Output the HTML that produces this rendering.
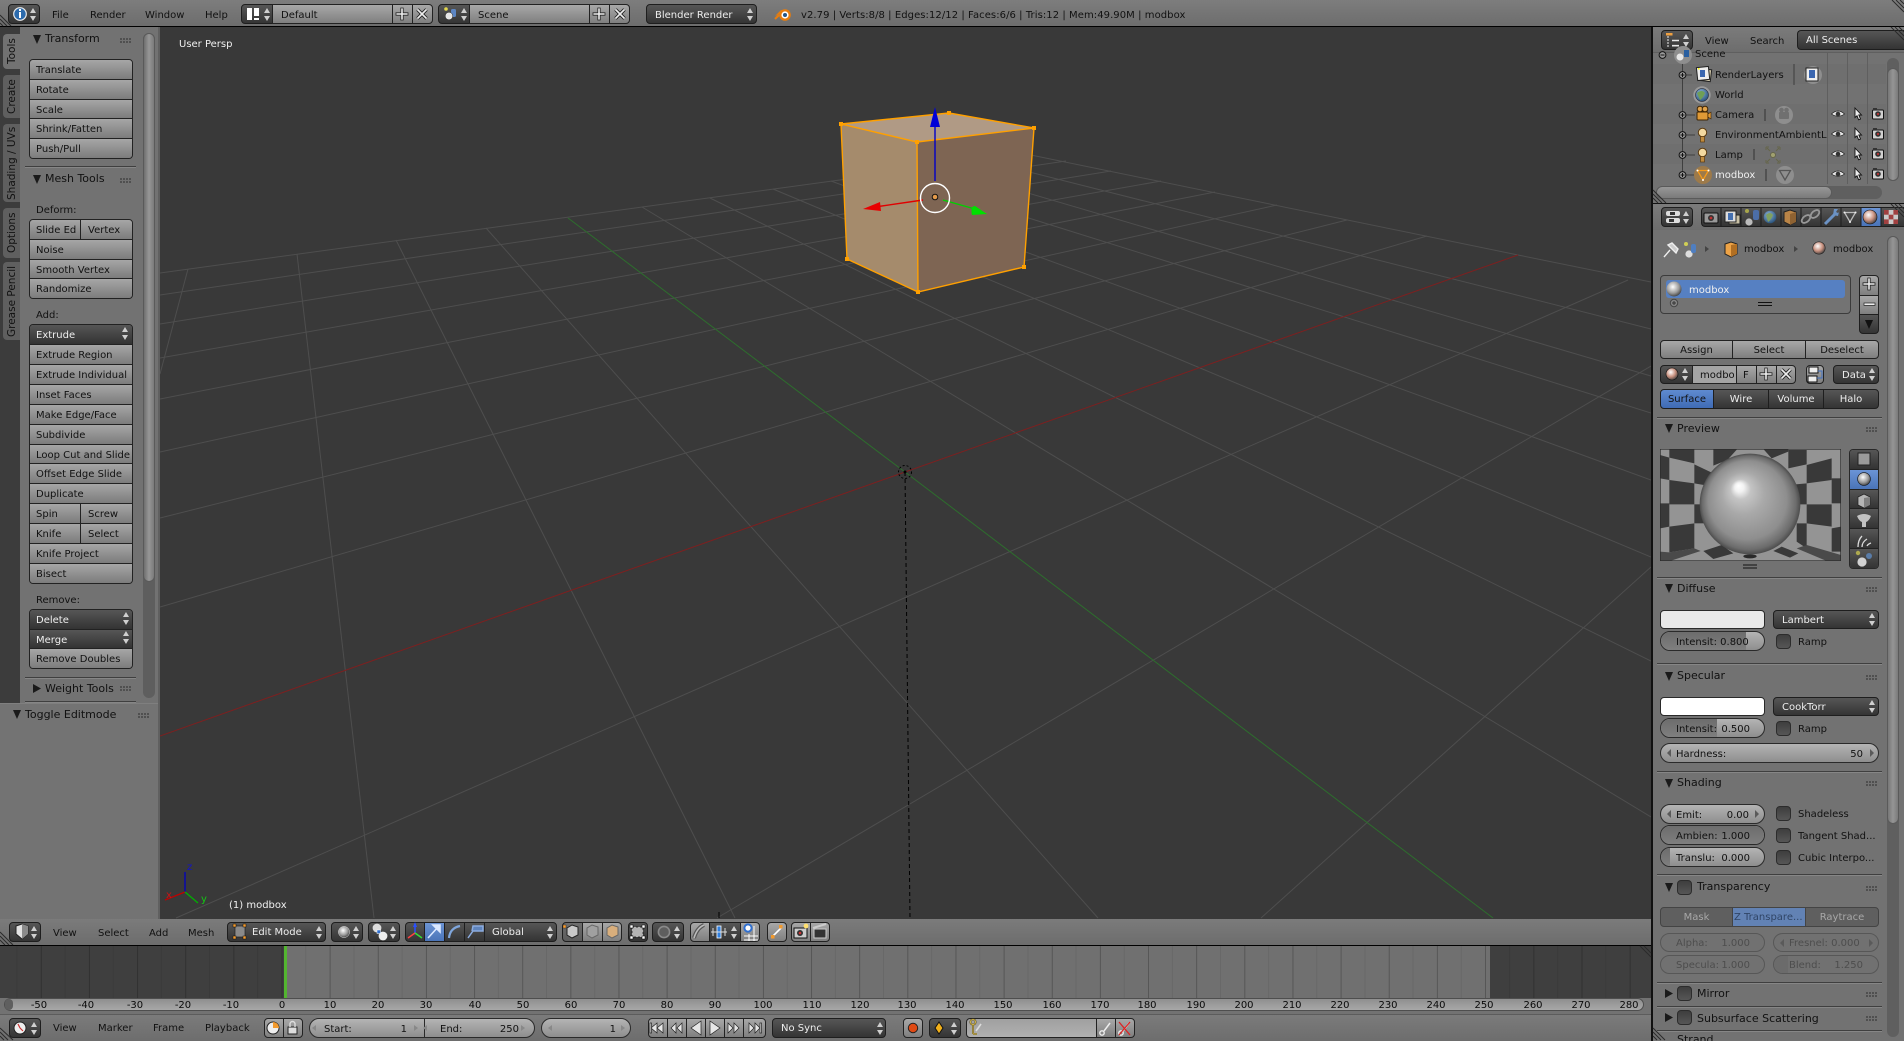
<!DOCTYPE html>
<html style="width:1904px;height:1041px;overflow:hidden"><head><meta charset="utf-8"><title>Blender</title>
<style>
html,body{margin:0;padding:0}
body{width:1904px;height:1041px;overflow:hidden;background:#727272;position:relative;font:10px/14px "DejaVu Sans","Liberation Sans",sans-serif;color:#000}
div,span{box-sizing:border-box}
.a{position:absolute}
.t{position:absolute;white-space:nowrap;line-height:14px;color:#111;margin-top:1px}
.h11{font-size:11px;color:#111;margin-top:0}
.w{color:#f0f0f0}
.grp{position:absolute;border:1px solid #222;border-radius:4px;overflow:hidden;display:flex;flex-direction:column}
.r{flex:1 1 0;display:flex;border-bottom:1px solid #222;min-height:0}
.r:last-child{border-bottom:0}
.c0{flex:1 1 0;padding-left:6px;background:linear-gradient(#a6a6a6,#7c7c7c);white-space:nowrap;overflow:hidden;line-height:21px;border-right:1px solid #222;color:#111}
.c0:last-child{border-right:0}
.dk{background:linear-gradient(#565656,#333);color:#eee}
.bl{background:linear-gradient(#6b94d6,#4a74b8)}
.m{position:absolute;border:1px solid #1e1e1e;border-radius:4px;background:linear-gradient(#565656,#343434);color:#eee;white-space:nowrap;overflow:hidden}
.lt{position:absolute;border:1px solid #222;background:linear-gradient(#a8a8a8,#7f7f7f);color:#111;white-space:nowrap;overflow:hidden}
.n{position:absolute;height:20px;border:1px solid #2a2a2a;border-radius:10px;background:linear-gradient(#b4b4b4,#8e8e8e);overflow:hidden;color:#111}
.n b{position:absolute;left:0;top:0;bottom:0;background:linear-gradient(#6c6c6c,#7f7f7f);font-weight:normal}
.n span{position:absolute;top:4px;line-height:14px;white-space:nowrap}
.off{border-color:#575757;background:#717171;color:#4d4d4d}
.off b{background:#6b6b6b}
.cb{position:absolute;width:15px;height:15px;border:1px solid #2c2c2c;border-radius:4px;background:linear-gradient(#3e3e3e,#565656)}
.sep{position:absolute;height:1px;background:#3f3f3f;border-bottom:0;box-shadow:0 1px 0 #868686}
.g{position:absolute;width:12px;height:6px;background-image:radial-gradient(circle at 1px 1px,#2f2f2f .6px,transparent 1px);background-size:3px 3px}
.vt{position:absolute;writing-mode:vertical-rl;transform:rotate(180deg);white-space:nowrap;line-height:16px;text-align:center;color:#111;font-size:10.5px}
.tab{position:absolute;left:3px;width:17px;background:#5f5f5f;border-radius:4px 0 0 4px}
.row{position:absolute;left:1653px;width:233px;height:20px}
</style></head><body>

<!-- top bar -->
<div class="a" style="left:0;top:0;width:1904px;height:26px;background:linear-gradient(#7d7d7d,#6d6d6d)"></div>
<div class="a" style="left:0;top:26px;width:1904px;height:1px;background:#000"></div>

<!-- viewport -->
<div class="a" style="left:160px;top:27px;width:1491px;height:892px;background:#393939"></div>
<div class="a" style="left:0;top:27px;width:160px;height:892px;background:#727272"></div>
<div class="a" style="left:0;top:27px;width:20px;height:677px;background:#3c3c3c"></div>
<div class="a" style="left:158px;top:27px;width:2px;height:892px;background:#606060"></div>

<!-- left tabs -->
<div class="tab" style="top:34px;height:35px;background:#727272"></div>
<div class="tab" style="top:75px;height:43px"></div>
<div class="tab" style="top:124px;height:78px"></div>
<div class="tab" style="top:208px;height:50px"></div>
<div class="tab" style="top:262px;height:78px"></div>
<span class="vt" style="left:4px;top:34px;height:35px">Tools</span>
<span class="vt" style="left:4px;top:75px;height:43px">Create</span>
<span class="vt" style="left:4px;top:124px;height:78px">Shading / UVs</span>
<span class="vt" style="left:4px;top:208px;height:50px">Options</span>
<span class="vt" style="left:4px;top:262px;height:78px">Grease Pencil</span>

<!-- left panel scrollbar -->
<div class="a" style="left:143px;top:33px;width:12px;height:665px;border-radius:6px;background:#5e5e5e"></div>
<div class="a" style="left:143px;top:33px;width:12px;height:549px;border-radius:6px;background:linear-gradient(90deg,#6f6f6f,#979797 50%,#7a7a7a);border:1px solid #5a5a5a"></div>

<span class="t h11" style="left:45px;top:32px">Transform</span><div class="g" style="left:120px;top:38px"></div>
<div class="grp" style="left:29px;top:59px;width:104px;height:100px">
<div class="r"><div class="c0">Translate</div></div><div class="r"><div class="c0">Rotate</div></div><div class="r"><div class="c0">Scale</div></div><div class="r"><div class="c0">Shrink/Fatten</div></div><div class="r"><div class="c0">Push/Pull</div></div>
</div>
<div class="sep" style="left:25px;top:166px;width:111px"></div>
<span class="t h11" style="left:45px;top:172px">Mesh Tools</span><div class="g" style="left:120px;top:178px"></div>
<span class="t" style="left:36px;top:203px">Deform:</span>
<div class="grp" style="left:29px;top:219px;width:104px;height:80px">
<div class="r"><div class="c0" style="flex:0 0 51px">Slide Ed</div><div class="c0" style="padding-left:7px">Vertex</div></div>
<div class="r"><div class="c0">Noise</div></div><div class="r"><div class="c0">Smooth Vertex</div></div><div class="r"><div class="c0">Randomize</div></div>
</div>
<span class="t" style="left:36px;top:308px">Add:</span>
<div class="grp" style="left:29px;top:324px;width:104px;height:260px">
<div class="r"><div class="c0 dk">Extrude</div></div>
<div class="r"><div class="c0">Extrude Region</div></div><div class="r"><div class="c0">Extrude Individual</div></div><div class="r"><div class="c0">Inset Faces</div></div><div class="r"><div class="c0">Make Edge/Face</div></div><div class="r"><div class="c0">Subdivide</div></div><div class="r"><div class="c0" style="padding-right:0">Loop Cut and Slide</div></div><div class="r"><div class="c0">Offset Edge Slide</div></div><div class="r"><div class="c0">Duplicate</div></div>
<div class="r"><div class="c0" style="flex:0 0 51px">Spin</div><div class="c0" style="padding-left:7px">Screw</div></div>
<div class="r"><div class="c0" style="flex:0 0 51px">Knife</div><div class="c0" style="padding-left:7px">Select</div></div>
<div class="r"><div class="c0">Knife Project</div></div><div class="r"><div class="c0">Bisect</div></div>
</div>
<span class="t" style="left:36px;top:593px">Remove:</span>
<div class="grp" style="left:29px;top:609px;width:104px;height:60px">
<div class="r"><div class="c0 dk">Delete</div></div><div class="r"><div class="c0 dk">Merge</div></div><div class="r"><div class="c0">Remove Doubles</div></div>
</div>
<div class="sep" style="left:25px;top:677px;width:111px"></div>
<span class="t h11" style="left:45px;top:682px">Weight Tools</span><div class="g" style="left:120px;top:686px"></div>
<div class="sep" style="left:25px;top:701px;width:111px"></div>
<div class="a" style="left:0;top:703px;width:158px;height:216px;background:#737373;border-top:1px solid #7f7f7f"></div>
<span class="t h11" style="left:25px;top:708px">Toggle Editmode</span><div class="g" style="left:138px;top:713px"></div>

<!-- top bar widgets -->
<div class="m" style="left:8px;top:4px;width:32px;height:20px"></div>
<span class="t" style="left:52px;top:8px">File</span><span class="t" style="left:90px;top:8px">Render</span><span class="t" style="left:145px;top:8px">Window</span><span class="t" style="left:205px;top:8px">Help</span>
<div class="m" style="left:241px;top:4px;width:33px;height:20px;border-radius:4px 0 0 4px"></div>
<div class="lt" style="left:272px;top:4px;width:121px;height:20px;padding:4px 0 0 8px">Default</div>
<div class="lt" style="left:392px;top:4px;width:21px;height:20px"></div>
<div class="lt" style="left:412px;top:4px;width:21px;height:20px;border-radius:0 4px 4px 0"></div>
<div class="m" style="left:438px;top:4px;width:33px;height:20px;border-radius:4px 0 0 4px"></div>
<div class="lt" style="left:469px;top:4px;width:121px;height:20px;padding:4px 0 0 8px">Scene</div>
<div class="lt" style="left:589px;top:4px;width:21px;height:20px"></div>
<div class="lt" style="left:609px;top:4px;width:21px;height:20px;border-radius:0 4px 4px 0"></div>
<div class="m" style="left:646px;top:4px;width:111px;height:20px;padding:4px 0 0 8px">Blender Render</div>
<span class="t" style="left:801px;top:8px;color:#111;letter-spacing:.065px">v2.79 | Verts:8/8 | Edges:12/12 | Faces:6/6 | Tris:12 | Mem:49.90M | modbox</span>

<span class="t w" style="left:179px;top:37px">User Persp</span>
<span class="t w" style="left:229px;top:898px">(1) modbox</span>

<!-- 3D header -->
<div class="a" style="left:0;top:919px;width:1651px;height:26px;background:linear-gradient(#7b7b7b,#6d6d6d)"></div>
<div class="a" style="left:0;top:945px;width:1651px;height:1px;background:#000"></div>
<div class="m" style="left:9px;top:922px;width:32px;height:20px"></div>
<span class="t" style="left:53px;top:926px">View</span><span class="t" style="left:98px;top:926px">Select</span><span class="t" style="left:149px;top:926px">Add</span><span class="t" style="left:188px;top:926px">Mesh</span>
<div class="m" style="left:227px;top:922px;width:99px;height:20px;padding:3px 0 0 24px">Edit Mode</div>
<div class="m" style="left:331px;top:922px;width:32px;height:20px"></div>
<div class="m" style="left:368px;top:922px;width:32px;height:20px"></div>
<div class="m" style="left:405px;top:922px;width:20px;height:20px;border-radius:4px 0 0 4px"></div>
<div class="m" style="left:424px;top:922px;width:21px;height:20px;border-radius:0;background:linear-gradient(#6c94d4,#4a74b8)"></div>
<div class="m" style="left:444px;top:922px;width:21px;height:20px;border-radius:0"></div>
<div class="m" style="left:464px;top:922px;width:21px;height:20px;border-radius:0"></div>
<div class="m" style="left:484px;top:922px;width:73px;height:20px;padding:3px 0 0 7px;border-radius:0 4px 4px 0">Global</div>
<div class="m" style="left:562px;top:922px;width:21px;height:20px;border-radius:4px 0 0 4px;background:linear-gradient(#6e6e6e,#5c5c5c)"></div>
<div class="lt" style="left:582px;top:922px;width:21px;height:20px"></div>
<div class="lt" style="left:602px;top:922px;width:20px;height:20px;border-radius:0 4px 4px 0"></div>
<div class="m" style="left:628px;top:922px;width:20px;height:20px"></div>
<div class="m" style="left:652px;top:922px;width:32px;height:20px"></div>
<div class="lt" style="left:690px;top:922px;width:20px;height:20px;border-radius:4px 0 0 4px"></div>
<div class="m" style="left:709px;top:922px;width:32px;height:20px;border-radius:0"></div>
<div class="lt" style="left:740px;top:922px;width:20px;height:20px;border-radius:0 4px 4px 0"></div>
<div class="lt" style="left:767px;top:922px;width:20px;height:20px;border-radius:4px"></div>
<div class="lt" style="left:791px;top:922px;width:20px;height:20px;border-radius:4px 0 0 4px"></div>
<div class="lt" style="left:810px;top:922px;width:20px;height:20px;border-radius:0 4px 4px 0"></div>

<!-- timeline -->
<div class="a" style="left:0;top:946px;width:284px;height:52px;background-color:#3f3f3f;background-image:linear-gradient(90deg,#313131 1px,transparent 1px,transparent 24px,#3a3a3a 24px,#3a3a3a 25px,transparent 25px);background-size:48.15px 100%;background-position:40.75px 0"></div>
<div class="a" style="left:284px;top:946px;width:1206px;height:52px;background-color:#707070;background-image:linear-gradient(90deg,#565656 1px,transparent 1px,transparent 24px,#686868 24px,#686868 25px,transparent 25px);background-size:48.15px 100%;background-position:45.65px 0"></div>
<div class="a" style="left:1490px;top:946px;width:161px;height:52px;background-color:#3f3f3f;background-image:linear-gradient(90deg,#313131 1px,transparent 1px,transparent 24px,#3a3a3a 24px,#3a3a3a 25px,transparent 25px);background-size:48.15px 100%;background-position:43.4px 0"></div>
<div class="a" style="left:284px;top:946px;width:3px;height:52px;background:#53b530"></div>
<div class="a" style="left:4px;top:998px;width:1640px;height:13px;border-radius:7px;background:linear-gradient(#8f8f8f,#a8a8a8);border:1px solid #4e4e4e"></div>
<div class="a" style="left:5px;top:999px;width:8px;height:11px;border-radius:6px;background:#5f5f5f"></div>
<div class="a" style="left:0;top:1014px;width:1651px;height:27px;background:linear-gradient(#7b7b7b,#6d6d6d);border-top:1px solid #5c5c5c"></div>
<div class="m" style="left:9px;top:1018px;width:32px;height:20px"></div>
<span class="t" style="left:53px;top:1021px">View</span><span class="t" style="left:98px;top:1021px">Marker</span><span class="t" style="left:153px;top:1021px">Frame</span><span class="t" style="left:205px;top:1021px">Playback</span>
<div class="lt" style="left:264px;top:1018px;width:20px;height:20px;border-radius:4px 0 0 4px"></div>
<div class="lt" style="left:283px;top:1018px;width:20px;height:20px;border-radius:0 4px 4px 0"></div>
<div class="n" style="left:309px;top:1018px;width:116px;border-radius:10px 0 0 10px"><span style="left:14px">Start:</span><span style="right:17px">1</span></div>
<div class="n" style="left:424px;top:1018px;width:111px;border-radius:0 10px 10px 0"><span style="left:15px">End:</span><span style="right:15px">250</span></div>
<div class="n" style="left:541px;top:1018px;width:90px"><span style="right:14px">1</span></div>
<div class="lt" style="left:648px;top:1018px;width:20px;height:20px;border-radius:4px 0 0 4px"></div>
<div class="lt" style="left:667px;top:1018px;width:20px;height:20px"></div>
<div class="lt" style="left:686px;top:1018px;width:20px;height:20px"></div>
<div class="lt" style="left:705px;top:1018px;width:20px;height:20px"></div>
<div class="lt" style="left:724px;top:1018px;width:20px;height:20px"></div>
<div class="lt" style="left:743px;top:1018px;width:23px;height:20px;border-radius:0 4px 4px 0"></div>
<div class="m" style="left:772px;top:1018px;width:114px;height:20px;padding:3px 0 0 8px">No Sync</div>
<div class="lt" style="left:903px;top:1018px;width:20px;height:20px;border-radius:4px"></div>
<div class="m" style="left:929px;top:1018px;width:32px;height:20px"></div>
<div class="lt" style="left:966px;top:1018px;width:131px;height:20px;border-radius:4px 0 0 4px;background:linear-gradient(#a0a0a0,#b0b0b0)"></div>
<div class="lt" style="left:1096px;top:1018px;width:20px;height:20px"></div>
<div class="lt" style="left:1115px;top:1018px;width:20px;height:20px;border-radius:0 4px 4px 0"></div>

<!-- RIGHT PANE -->
<div class="a" style="left:1651px;top:27px;width:2px;height:1014px;background:#111"></div>
<div class="a" style="left:1653px;top:27px;width:251px;height:1014px;background:#727272"></div>
<!-- outliner -->
<div class="a" style="left:1653px;top:27px;width:251px;height:25px;background:linear-gradient(#7b7b7b,#6d6d6d)"></div>
<div class="a" style="left:1653px;top:52px;width:251px;height:1px;background:#5f5f5f"></div>
<div class="m" style="left:1661px;top:30px;width:32px;height:20px"></div>
<span class="t" style="left:1705px;top:34px">View</span><span class="t" style="left:1750px;top:34px">Search</span>
<div class="m" style="left:1797px;top:30px;width:107px;height:20px;padding:3px 0 0 8px;border-radius:4px 0 0 4px;border-right:0">All Scenes</div>
<div class="row" style="top:64px;background:#6f6f6f"></div>
<div class="row" style="top:104px;background:#6f6f6f"></div>
<div class="row" style="top:144px;background:#6f6f6f"></div>
<div class="a" style="left:1827px;top:53px;width:1px;height:131px;background:#5f5f5f"></div>
<div class="a" style="left:1847px;top:53px;width:1px;height:131px;background:#5f5f5f"></div>
<div class="a" style="left:1867px;top:53px;width:1px;height:131px;background:#5f5f5f"></div>
<span class="t" style="left:1695px;top:47px">Scene</span>
<span class="t" style="left:1715px;top:68px">RenderLayers</span>
<span class="t" style="left:1715px;top:88px">World</span>
<span class="t" style="left:1715px;top:108px">Camera</span>
<span class="t" style="left:1715px;top:128px">EnvironmentAmbientL</span>
<span class="t" style="left:1715px;top:148px">Lamp</span>
<span class="t w" style="left:1715px;top:168px">modbox</span>
<div class="a" style="left:1656px;top:186px;width:226px;height:13px;border-radius:7px;background:#5f5f5f"></div>
<div class="a" style="left:1656px;top:186px;width:176px;height:13px;border-radius:7px;background:linear-gradient(#979797,#7a7a7a);border:1px solid #5a5a5a"></div>
<div class="a" style="left:1887px;top:58px;width:12px;height:123px;border-radius:6px;background:#5f5f5f"></div>
<div class="a" style="left:1887px;top:68px;width:12px;height:113px;border-radius:6px;background:linear-gradient(90deg,#777,#959595 50%,#7a7a7a);border:1px solid #5a5a5a"></div>
<div class="a" style="left:1653px;top:203px;width:251px;height:1px;background:#111"></div>

<!-- props header -->
<div class="a" style="left:1653px;top:204px;width:251px;height:26px;background:linear-gradient(#7b7b7b,#6d6d6d)"></div>
<div class="m" style="left:1661px;top:207px;width:32px;height:20px"></div>
<div class="m" style="left:1701px;top:207px;width:203px;height:20px;border-radius:4px 0 0 4px;border-right:0"></div>
<div class="a" style="left:1861px;top:208px;width:20px;height:18px;background:linear-gradient(#6c94d4,#4a74b8)"></div>
<!-- props scrollbar -->
<div class="a" style="left:1887px;top:236px;width:12px;height:801px;border-radius:6px;background:#5f5f5f"></div>
<div class="a" style="left:1887px;top:236px;width:12px;height:588px;border-radius:6px;background:linear-gradient(90deg,#777,#959595 50%,#7a7a7a);border:1px solid #5a5a5a"></div>

<span class="t" style="left:1744px;top:242px">modbox</span><span class="t" style="left:1833px;top:242px">modbox</span>

<div class="a" style="left:1660px;top:275px;width:191px;height:39px;border:1px solid #3c3c3c;border-radius:4px;background:#737373"></div>
<div class="a" style="left:1666px;top:280px;width:179px;height:18px;background:#5680c2;border-radius:3px"></div>
<span class="t w" style="left:1689px;top:283px">modbox</span>
<div class="lt" style="left:1859px;top:275px;width:20px;height:21px;border-radius:4px 4px 0 0"></div>
<div class="lt" style="left:1859px;top:295px;width:20px;height:20px"></div>
<div class="m" style="left:1859px;top:314px;width:20px;height:20px;border-radius:0 0 4px 4px"></div>

<div class="lt" style="left:1660px;top:340px;width:73px;height:19px;border-radius:4px 0 0 4px;text-align:center;line-height:19px">Assign</div>
<div class="lt" style="left:1732px;top:340px;width:74px;height:19px;text-align:center;line-height:19px">Select</div>
<div class="lt" style="left:1805px;top:340px;width:74px;height:19px;border-radius:0 4px 4px 0;text-align:center;line-height:19px">Deselect</div>

<div class="m" style="left:1660px;top:365px;width:33px;height:19px;border-radius:4px 0 0 4px"></div>
<div class="lt" style="left:1692px;top:365px;width:45px;height:19px;padding-left:7px;line-height:20px;background:linear-gradient(#a4a4a4,#a4a4a4)">modbo</div>
<div class="lt" style="left:1736px;top:365px;width:21px;height:19px;padding-left:6px;line-height:20px">F</div>
<div class="lt" style="left:1756px;top:365px;width:21px;height:19px"></div>
<div class="lt" style="left:1776px;top:365px;width:20px;height:19px;border-radius:0 4px 4px 0"></div>
<div class="lt" style="left:1806px;top:365px;width:18px;height:19px;border-radius:4px"></div>
<div class="m" style="left:1833px;top:365px;width:46px;height:19px;padding:3px 0 0 8px">Data</div>

<div class="m" style="left:1660px;top:389px;width:54px;height:20px;border-radius:4px 0 0 4px;background:linear-gradient(#5f8bd0,#3f6bb5);color:#111;text-align:center;line-height:20px">Surface</div>
<div class="m" style="left:1713px;top:389px;width:56px;height:20px;border-radius:0;text-align:center;line-height:20px">Wire</div>
<div class="m" style="left:1768px;top:389px;width:56px;height:20px;border-radius:0;text-align:center;line-height:20px">Volume</div>
<div class="m" style="left:1823px;top:389px;width:56px;height:20px;border-radius:0 4px 4px 0;text-align:center;line-height:20px">Halo</div>

<div class="sep" style="left:1657px;top:417px;width:225px"></div>
<span class="t h11" style="left:1677px;top:422px">Preview</span><div class="g" style="left:1866px;top:427px"></div>
<div class="grp" style="left:1849px;top:449px;width:30px;height:120px;border-color:#282828">
<div class="r"><div class="c0 dk"></div></div><div class="r"><div class="c0 bl"></div></div><div class="r"><div class="c0 dk"></div></div><div class="r"><div class="c0 dk"></div></div><div class="r"><div class="c0 dk"></div></div><div class="r"><div class="c0 dk"></div></div>
</div>
<div class="sep" style="left:1657px;top:577px;width:225px"></div>
<span class="t h11" style="left:1677px;top:582px">Diffuse</span><div class="g" style="left:1866px;top:587px"></div>
<div class="a" style="left:1660px;top:610px;width:105px;height:19px;background:#e9e9e9;border:1px solid #2a2a2a;border-radius:4px"></div>
<div class="m" style="left:1773px;top:610px;width:106px;height:19px;padding:3px 0 0 8px">Lambert</div>
<div class="n" style="left:1660px;top:631px;width:105px"><b style="width:85px"></b><span style="left:15px">Intensit: 0.800</span></div>
<div class="cb" style="left:1776px;top:634px"></div><span class="t" style="left:1798px;top:635px">Ramp</span>
<div class="sep" style="left:1657px;top:663px;width:225px"></div>
<span class="t h11" style="left:1677px;top:669px">Specular</span><div class="g" style="left:1866px;top:675px"></div>
<div class="a" style="left:1660px;top:697px;width:105px;height:19px;background:#fff;border:1px solid #2a2a2a;border-radius:4px"></div>
<div class="m" style="left:1773px;top:697px;width:106px;height:19px;padding:3px 0 0 8px">CookTorr</div>
<div class="n" style="left:1660px;top:718px;width:105px"><b style="width:56px"></b><span style="left:15px">Intensit:</span><span style="right:14px">0.500</span></div>
<div class="cb" style="left:1776px;top:721px"></div><span class="t" style="left:1798px;top:722px">Ramp</span>
<div class="n" style="left:1660px;top:743px;width:219px"><span style="left:15px">Hardness:</span><span style="right:15px">50</span></div>
<div class="sep" style="left:1657px;top:771px;width:225px"></div>
<span class="t h11" style="left:1677px;top:776px">Shading</span><div class="g" style="left:1866px;top:781px"></div>
<div class="n" style="left:1660px;top:804px;width:105px"><span style="left:15px">Emit:</span><span style="right:15px">0.00</span></div>
<div class="n" style="left:1660px;top:825px;width:105px"><b style="width:105px"></b><span style="left:15px">Ambien:</span><span style="right:14px">1.000</span></div>
<div class="n" style="left:1660px;top:847px;width:105px"><b style="width:9px"></b><span style="left:15px">Translu:</span><span style="right:14px">0.000</span></div>
<div class="cb" style="left:1776px;top:806px"></div><span class="t" style="left:1798px;top:807px">Shadeless</span>
<div class="cb" style="left:1776px;top:828px"></div><span class="t" style="left:1798px;top:829px">Tangent Shad...</span>
<div class="cb" style="left:1776px;top:850px"></div><span class="t" style="left:1798px;top:851px">Cubic Interpo...</span>
<div class="sep" style="left:1657px;top:874px;width:225px"></div>
<div class="cb" style="left:1677px;top:880px"></div><span class="t h11" style="left:1697px;top:880px">Transparency</span><div class="g" style="left:1866px;top:886px"></div>
<div class="m" style="left:1660px;top:907px;width:73px;height:20px;border-radius:4px 0 0 4px;background:#5f5f5f;color:#a8a8a8;border-color:#444;text-align:center;line-height:20px">Mask</div>
<div class="m" style="left:1732px;top:907px;width:74px;height:20px;border-radius:0;background:#6282b4;color:#304566;border-color:#444;padding-left:1px;line-height:20px">Z Transpare...</div>
<div class="m" style="left:1805px;top:907px;width:74px;height:20px;border-radius:0 4px 4px 0;background:#5f5f5f;color:#a8a8a8;border-color:#444;text-align:center;line-height:20px">Raytrace</div>
<div class="n off" style="left:1660px;top:933px;width:105px;height:19px"><span style="left:15px;top:3px">Alpha:</span><span style="right:14px;top:3px">1.000</span></div>
<div class="n off" style="left:1773px;top:933px;width:106px;height:19px"><span style="left:15px;top:3px">Fresnel: 0.000</span></div>
<div class="n off" style="left:1660px;top:955px;width:105px;height:19px"><span style="left:15px;top:3px">Specula:</span><span style="right:14px;top:3px">1.000</span></div>
<div class="n off" style="left:1773px;top:955px;width:106px;height:19px"><b style="width:14px"></b><span style="left:15px;top:3px">Blend:</span><span style="right:15px;top:3px">1.250</span></div>
<div class="sep" style="left:1657px;top:982px;width:225px"></div>
<div class="cb" style="left:1677px;top:986px"></div><span class="t h11" style="left:1697px;top:987px">Mirror</span><div class="g" style="left:1866px;top:992px"></div>
<div class="sep" style="left:1657px;top:1006px;width:225px"></div>
<div class="cb" style="left:1677px;top:1010px"></div><span class="t h11" style="left:1697px;top:1012px">Subsurface Scattering</span><div class="g" style="left:1866px;top:1016px"></div>
<div class="sep" style="left:1657px;top:1030px;width:225px"></div>
<span class="t h11" style="left:1677px;top:1033px;height:8px;overflow:hidden">Strand</span>

<!-- overlay svg -->
<svg class="a" style="left:0;top:0;display:block" width="1904" height="1041" viewBox="0 0 1904 1041" font-family="DejaVu Sans, sans-serif">
<defs>
<g id="ud"><path d="M3 0L6 5H0z"/><path d="M3 13L6 8H0z"/></g>
<path id="td" d="M0 0H8L4 9z" fill="#1a1a1a"/>
<path id="trg" d="M0 0L8 4.5L0 9z" fill="#1a1a1a"/>
<g id="plus"><path d="M-6-1.2H-1.2V-6H1.2V-1.2H6V1.2H1.2V6H-1.2V1.2H-6z" fill="#eee" stroke="#222" stroke-width=".8"/></g>
<g id="cross"><path d="M-4.5-4.5L4.5 4.5M4.5-4.5L-4.5 4.5" stroke="#222" stroke-width="3.4"/><path d="M-4.5-4.5L4.5 4.5M4.5-4.5L-4.5 4.5" stroke="#eee" stroke-width="1.6"/></g>
<g id="eye"><path d="M-6.5 0Q0-6 6.5 0Q0 4.5-6.5 0z" fill="#e8e8e8" stroke="#222" stroke-width=".7"/><circle r="2.3" fill="#333"/></g>
<path id="arrow" d="M-3-6L3.5 1H.8L2.5 5L.6 5.8L-1 1.8L-3 3.5z" fill="#eee" stroke="#111" stroke-width=".9"/>
<g id="cam"><rect x="-5.5" y="-4" width="11" height="9" rx="1" fill="#d0d0d0" stroke="#111"/><circle r="2.8" fill="#333"/><circle cx="0" cy="0" r="1.1" fill="#b33"/><rect x="-5" y="-6" width="4" height="2" fill="#333"/></g>
<g id="bulb"><circle cy="-2.5" r="4.2" fill="#f3d9a0" stroke="#5a3a10"/><rect x="-2" y="1.5" width="4" height="5.5" fill="#bf8b3f" stroke="#5a3a10" stroke-width=".7"/></g>
<g id="pm"><circle r="3.4" fill="#999" stroke="#111"/><path d="M-2 0H2M0-2V2" stroke="#111"/></g>
<g id="tri"><path d="M-5.5-4.5H5.5L0 5z" fill="none" stroke-width="1.3"/></g>
<radialGradient id="sp" cx=".42" cy=".36" r=".7"><stop offset="0" stop-color="#fff"/><stop offset=".6" stop-color="#999"/><stop offset="1" stop-color="#333"/></radialGradient>
<radialGradient id="mat" cx=".4" cy=".35" r=".7"><stop offset="0" stop-color="#fff"/><stop offset=".55" stop-color="#c9917f"/><stop offset="1" stop-color="#3a3a3a"/></radialGradient>
<radialGradient id="earth" cx=".4" cy=".35" r=".7"><stop offset="0" stop-color="#8fb5d8"/><stop offset="1" stop-color="#254e78"/></radialGradient>
<radialGradient id="big" gradientUnits="userSpaceOnUse" cx="300" cy="177" r="151" fx="265" fy="122"><stop offset="0" stop-color="#fff"/><stop offset=".09" stop-color="#f2f2f2"/><stop offset=".2" stop-color="#c4c4c4"/><stop offset=".42" stop-color="#a9a9a9"/><stop offset=".78" stop-color="#8e8e8e"/><stop offset=".93" stop-color="#6c6c6c"/><stop offset="1" stop-color="#4c4c4c"/></radialGradient>
</defs>

<!-- viewport grid -->
<svg x="160" y="27" width="1491" height="892" viewBox="160 27 1491 892">
<g stroke="#4e4e4e" stroke-width="1" fill="none">
<path d="M160 273L1030 154M160 295L1066 161M160 324L1111 171M160 358L1161 181M160 399L1215 192M160 452L1277 205M160 518L1347 220M160 607L1427 236M176 918L1628 280M717 918L1651 366M1261 918L1651 567"/>
<path d="M188 269L160 374M297 254L374 918M396 240L735 918M486 228L1098 918M642 207L1651 817M710 198L1651 661M773 189L1651 557M831 181L1651 480M885 173L1651 413M936 166L1651 376M982 160L1651 329M1026 154L1518 255L1651 282"/>
</g>
<path d="M160 736L905 472L1518 255" stroke="#7c2020" fill="none"/>
<path d="M568 218L905 472L1493 918" stroke="#2d6e2d" fill="none"/>
<path d="M905 472L910 918" stroke="#000" stroke-dasharray="4 3" fill="none"/>
<path d="M719 912V918" stroke="#000"/>
<circle cx="905" cy="472" r="6.5" fill="none" stroke="#000" stroke-dasharray="2 2"/>
<circle cx="905" cy="472" r="1.5" fill="#000"/>
</svg>

<!-- cube -->
<path d="M841 124L949 113L1034 128L917 142z" fill="#b09a85"/>
<path d="M841 124L917 142L918 292L847 259z" fill="#a58b6c"/>
<path d="M917 142L1034 128L1024 267L918 292z" fill="#7e6553"/>
<path d="M841 124L949 113L1034 128L917 142zM841 124L847 259L918 292L1024 267L1034 128M917 142L918 292" fill="none" stroke="#ffa000" stroke-width="1.4"/>
<g fill="#ffa000"><rect x="839" y="122" width="4" height="4"/><rect x="947" y="111" width="4" height="4"/><rect x="1032" y="126" width="4" height="4"/><rect x="915" y="140" width="4" height="4"/><rect x="845" y="257" width="4" height="4"/><rect x="916" y="290" width="4" height="4"/><rect x="1022" y="265" width="4" height="4"/></g>
<!-- manipulator -->
<path d="M935 181V115" stroke="#0000c8" stroke-width="1.4"/><path d="M935 107L940 127H930z" fill="#0000d8"/>
<path d="M923 200L875 207" stroke="#e00000" stroke-width="1.4"/><path d="M863 209L880 202L881 211z" fill="#e80000"/>
<path d="M943 200L975 209" stroke="#00d000" stroke-width="1.4"/><path d="M987 214L975 206Q970 206 972 215z" fill="#00e000"/>
<circle cx="935" cy="198" r="14.5" fill="none" stroke="#fff" stroke-width="1.4"/>
<circle cx="935" cy="197" r="2.8" fill="#e39a4b" stroke="#111"/>
<!-- axis widget -->
<path d="M185 892V872" stroke="#0000c0" stroke-width="1.3"/><path d="M185 892L165 900" stroke="#c00000" stroke-width="1.3"/><path d="M185 892L198 903" stroke="#00b000" stroke-width="1.3"/>
<text x="187" y="870" fill="#1414c8" font-size="10">z</text><text x="166" y="898" fill="#c81414" font-size="10">x</text><text x="201" y="902" fill="#14c814" font-size="10">y</text>

<!-- hatch corners -->
<g stroke="#2b2b2b" stroke-width="1" fill="none">
<path d="M0 15L11 26M0 19L7 26M0 23L3 26"/><path d="M1892 0L1904 12M1896 0L1904 8M1900 0L1904 4"/>
<path d="M0 932L13 945M0 936L9 945M0 940L5 945"/><path d="M0 1028L13 1040M0 1032L8 1040M0 1036L4 1040"/>
<path d="M1891 27L1904 40M1895 27L1904 36M1899 27L1904 32"/><path d="M1891 204L1904 217M1895 204L1904 213M1899 204L1904 209"/>
<path d="M1653 190L1666 203M1653 194L1662 203M1653 198L1658 203"/><path d="M1653 1028L1665 1040M1653 1032L1661 1040M1653 1036L1657 1040"/>
<path d="M1640 946L1651 957M1644 946L1651 953"/>
</g>

<!-- ud arrows -->
<g fill="#cfcfcf">
<use href="#ud" x="30" y="8"/><use href="#ud" x="264" y="8"/><use href="#ud" x="461" y="8"/><use href="#ud" x="747" y="8"/>
<use href="#ud" x="122" y="327"/><use href="#ud" x="123" y="612"/><use href="#ud" x="123" y="631"/>
<use href="#ud" x="31" y="926"/><use href="#ud" x="316" y="926"/><use href="#ud" x="353" y="926"/><use href="#ud" x="390" y="926"/><use href="#ud" x="547" y="926"/><use href="#ud" x="674" y="926"/><use href="#ud" x="731" y="926"/>
<use href="#ud" x="31" y="1022"/><use href="#ud" x="877" y="1022"/><use href="#ud" x="951" y="1022"/>
<use href="#ud" x="1683" y="34"/><use href="#ud" x="1683" y="211"/><use href="#ud" x="1682" y="368"/><use href="#ud" x="1869" y="368"/>
<use href="#ud" x="1869" y="613"/><use href="#ud" x="1869" y="700"/>
</g>

<!-- panel triangles -->
<use href="#td" x="33" y="35"/><use href="#td" x="33" y="175"/><use href="#trg" x="33" y="684"/><use href="#td" x="13" y="710"/>
<use href="#td" x="1665" y="424"/><use href="#td" x="1665" y="584"/><use href="#td" x="1665" y="672"/><use href="#td" x="1665" y="779"/><use href="#td" x="1665" y="883"/><use href="#trg" x="1665" y="989"/><use href="#trg" x="1665" y="1013"/>

<!-- top bar icons -->
<circle cx="20" cy="14" r="6.3" fill="#2c6bad" stroke="#eaeaea" stroke-width="1.2"/><rect x="19" y="9" width="2" height="2" fill="#fff"/><rect x="19" y="12" width="2" height="6" fill="#fff"/>
<rect x="247" y="8" width="5" height="12" fill="#fff"/><rect x="254" y="8" width="5" height="8" fill="#fff"/><rect x="254" y="18" width="5" height="2" fill="#fff"/>
<circle cx="446" cy="9" r="1.8" fill="#e4d84c"/><rect x="451" y="9" width="5" height="8" rx="1.5" fill="#5c86c4"/><circle cx="449" cy="16" r="3.8" fill="#e6e6e6" stroke="#222" stroke-width=".5"/>
<use href="#plus" x="402" y="14"/><use href="#cross" x="422" y="14"/><use href="#plus" x="599" y="14"/><use href="#cross" x="620" y="14"/>
<path d="M775 16L781 10H790Q786 10 782 13z" fill="#e87d0d"/><circle cx="785" cy="15" r="4.7" fill="#fff" stroke="#e87d0d" stroke-width="2.2"/><circle cx="785" cy="15" r="2" fill="#265787"/><path d="M775 19L779 15" stroke="#e87d0d" stroke-width="2"/>

<!-- 3d header icons -->
<path d="M16 926L22 924L28 926V934L22 939L16 934z" fill="#e2e2e2" stroke="#222"/><path d="M22 924V939L28 934V926z" fill="#8a8a8a"/>
<rect x="235" y="926" width="10" height="11" fill="#8a8a8a" stroke="#222" stroke-width=".7"/><g fill="#f29a2e" stroke="#111" stroke-width=".5"><rect x="233" y="924" width="3" height="3"/><rect x="243" y="924" width="3" height="3"/><rect x="233" y="936" width="3" height="3"/><rect x="243" y="936" width="3" height="3"/></g>
<circle cx="344" cy="932" r="5.6" fill="url(#sp)" stroke="#ddd" stroke-width=".5"/>
<circle cx="377" cy="928" r="4.4" fill="#ddd"/><circle cx="383" cy="936" r="4.4" fill="#eee"/><rect x="377" y="930" width="3.5" height="3.5" fill="#2f6fd0" stroke="#fff" stroke-width=".5"/>
<path d="M415 933V924" stroke="#2a50ff" stroke-width="1.5"/><path d="M415 933L408 938" stroke="#ff4040" stroke-width="1.5"/><path d="M415 933L422 938" stroke="#34e034" stroke-width="1.5"/><path d="M415 922L413 927H417z" fill="#2a50ff"/>
<path d="M428 938L438 927M433 925L440 925L440 932z" stroke="#dbe8ff" stroke-width="1.6" fill="#dbe8ff"/>
<path d="M449 938Q450 928 460 926" stroke="#7fa6dc" stroke-width="2.2" fill="none"/>
<path d="M468 938L473 931H483V926L473 926L472 931" stroke="#8bace0" stroke-width="1.5" fill="#5f84bc"/>
<path d="M567 928L572 925L578 927V935L572 938L567 935z" fill="#c8c8c8" stroke="#222"/><rect x="563" y="925" width="3" height="3" fill="#ffa030" stroke="#222" stroke-width=".4"/>
<path d="M587 928L592 925L598 927V935L592 938L587 935z" fill="#a0a0a0" stroke="#666"/><path d="M607 928L612 925L618 927V935L612 938L607 935z" fill="#d8ae7c" stroke="#666"/>
<rect x="632" y="927" width="11" height="10" fill="#b4b4b4"/><path d="M632 927H643V937H632z" fill="none" stroke="#111" stroke-width=".7" stroke-dasharray="2 2"/><g fill="#fff" stroke="#000" stroke-width=".5"><rect x="630" y="925" width="3" height="3"/><rect x="642" y="925" width="3" height="3"/><rect x="630" y="936" width="3" height="3"/><rect x="642" y="936" width="3" height="3"/></g>
<circle cx="664" cy="932" r="5.6" fill="#5e5e5e" stroke="#8a8a8a" stroke-width="1.6"/>
<path d="M694 938Q697 928 704 925" stroke="#555" stroke-width="4" fill="none"/><path d="M694 938Q697 928 704 925" stroke="#bbb" stroke-width="1.6" fill="none"/>
<rect x="717" y="926" width="4" height="12" fill="#2f7fe0" stroke="#fff" stroke-width=".8"/><path d="M713 928V936M725 928V936M711 932H727" stroke="#ddd"/>
<circle cx="748" cy="928" r="3.6" fill="#fff" stroke="#2f6fd0" stroke-width="2"/><path d="M749 934V941M754 926V941M744 936H758M744 940H758" stroke="#fff"/>
<path d="M772 937L782 927" stroke="#fff" stroke-width="1.6"/><rect x="779" y="925" width="3.5" height="3.5" fill="#f29a2e"/><rect x="771" y="935" width="3.5" height="3.5" fill="#f29a2e"/>
<rect x="794" y="928" width="13" height="10" fill="#ccc" stroke="#111"/><circle cx="800" cy="933" r="3" fill="#333"/><circle cx="800" cy="933" r="1.3" fill="#c33"/><circle cx="806" cy="926" r="2.4" fill="#ffe070"/>
<rect x="814" y="929" width="12" height="9" fill="#333" stroke="#ccc"/><path d="M813 928L826 924" stroke="#ccc" stroke-width="2"/>

<!-- timeline labels -->
<g font-size="10" fill="#0a0a0a" text-anchor="middle">
<text x="39" y="1008">-50</text><text x="86" y="1008">-40</text><text x="135" y="1008">-30</text><text x="183" y="1008">-20</text><text x="231" y="1008">-10</text><text x="282" y="1008">0</text><text x="330" y="1008">10</text><text x="378" y="1008">20</text><text x="426" y="1008">30</text><text x="475" y="1008">40</text><text x="523" y="1008">50</text><text x="571" y="1008">60</text><text x="619" y="1008">70</text><text x="667" y="1008">80</text><text x="715" y="1008">90</text><text x="763" y="1008">100</text><text x="812" y="1008">110</text><text x="860" y="1008">120</text><text x="907" y="1008">130</text><text x="955" y="1008">140</text><text x="1003" y="1008">150</text><text x="1052" y="1008">160</text><text x="1100" y="1008">170</text><text x="1147" y="1008">180</text><text x="1196" y="1008">190</text><text x="1244" y="1008">200</text><text x="1292" y="1008">210</text><text x="1340" y="1008">220</text><text x="1388" y="1008">230</text><text x="1436" y="1008">240</text><text x="1484" y="1008">250</text><text x="1533" y="1008">260</text><text x="1581" y="1008">270</text><text x="1629" y="1008">280</text>
</g>

<!-- timeline header icons -->
<circle cx="20" cy="1028" r="6" fill="#eee" stroke="#222"/><path d="M20 1028L18 1024M20 1028L23 1031" stroke="#c33" stroke-width="1.2"/>
<circle cx="273" cy="1028" r="6" fill="#eee" stroke="#222"/><path d="M273 1028V1022A6 6 0 0 1 279 1028z" fill="#f29a2e"/>
<rect x="288" y="1027" width="9" height="7" fill="#ddd" stroke="#222"/><path d="M290 1027V1024A2.5 2.5 0 0 1 295 1024V1027" fill="none" stroke="#ddd" stroke-width="1.4"/>
<g fill="#888"><path d="M316 1025L312 1028L316 1031zM427 1025L423 1028L427 1031zM414 1025L418 1028L414 1031zM521 1025L525 1028L521 1031zM552 1025L548 1028L552 1031zM621 1025L625 1028L621 1031z"/></g>
<g fill="#e6e6e6" stroke="#222" stroke-width=".7">
<path d="M657 1023L651 1028L657 1033zM663 1023L657 1028L663 1033z"/><rect x="650" y="1023" width="1.5" height="10"/>
<path d="M676 1023L671 1028L676 1033zM682 1023L677 1028L682 1033z"/>
<path d="M701 1021L691 1028L701 1035z"/><path d="M710 1021L720 1028L710 1035z"/>
<path d="M730 1023L735 1028L730 1033zM736 1023L741 1028L736 1033z" transform="translate(-2 0)"/>
<path d="M749 1023L754 1028L749 1033zM755 1023L760 1028L755 1033z"/><rect x="760" y="1023" width="1.5" height="10"/>
</g>
<circle cx="913" cy="1028" r="4.7" fill="#e04a14" stroke="#222"/>
<path d="M939 1022L943 1028L939 1034L935 1028z" fill="#f2b01a" stroke="#111"/>
<circle cx="973" cy="1022" r="2.6" fill="none" stroke="#4f4213" stroke-width="1.8"/><path d="M973 1024V1034M973 1034H977" stroke="#4f4213" stroke-width="1.8"/><circle cx="973" cy="1022" r="2.6" fill="none" stroke="#d8bb4d" stroke-width=".9"/><path d="M973 1024V1034M973 1034H977" stroke="#d8bb4d" stroke-width=".9"/><path d="M976 1031L981 1024" stroke="#ddd" stroke-width="1.6"/>
<circle cx="1102" cy="1033" r="2.2" fill="none" stroke="#eee" stroke-width="1.4"/><path d="M1104 1031L1110 1023" stroke="#eee" stroke-width="1.5"/>
<circle cx="1121" cy="1033" r="2.2" fill="none" stroke="#eee" stroke-width="1.4"/><path d="M1123 1031L1129 1023" stroke="#eee" stroke-width="1.5"/><path d="M1119 1022L1130 1035M1130 1022L1119 1035" stroke="#d22" stroke-width="1.3"/>

<!-- right pane icons -->
<rect x="1666" y="33" width="6.5" height="2.5" fill="#f0a040"/><path d="M1668 36V47" stroke="#eee" stroke-dasharray="2 1"/><path d="M1672 40.5H1679M1672 45.7H1679" stroke="#e6e6e6" stroke-width="1.6"/>
<!-- outliner tree -->
<path d="M1682.5 60V175M1686 75H1692M1686 115H1695M1686 135H1695M1686 155H1695M1686 175H1695" stroke="#3f3f3f"/>
<use href="#pm" x="1682.5" y="75"/><use href="#pm" x="1682.5" y="115"/><use href="#pm" x="1682.5" y="135"/><use href="#pm" x="1682.5" y="155"/><use href="#pm" x="1682.5" y="175"/>
<circle cx="1662.5" cy="55" r="3.4" fill="#999" stroke="#111"/><path d="M1660.5 55H1664.5" stroke="#111"/>
<circle cx="1683" cy="55" r="9" fill="#8e8e8e"/><circle cx="1680" cy="57" r="3.5" fill="#e6e6e6"/><rect x="1684" y="50" width="5" height="7" fill="#2a5fa0"/>
<rect x="1699" y="69" width="12" height="12" fill="#cfc6a8" stroke="#222" transform="rotate(7 1705 75)"/><rect x="1697" y="67" width="12" height="13" fill="#eee" stroke="#222" transform="rotate(-6 1703 73)"/><rect x="1700" y="70" width="5" height="7" fill="#3a66b0"/><rect x="1698" y="68" width="1.5" height="1.5" fill="#ff0"/>
<path d="M1794 64V85" stroke="#4c4c4c" stroke-width="1.4"/>
<circle cx="1813" cy="75" r="9" fill="#8e8e8e"/><rect x="1806" y="68" width="12" height="13" fill="#eee" stroke="#222"/><rect x="1809" y="70" width="6" height="8" fill="#3a66b0"/>
<circle cx="1702" cy="95" r="8.7" fill="#9a9a9a"/><circle cx="1702" cy="95" r="6.5" fill="url(#earth)" stroke="#112" stroke-width=".5"/><path d="M1697 93Q1702 89 1705 93Q1703 98 1700 100z" fill="#6f9f55"/>
<!-- camera -->
<rect x="1697" y="112" width="11" height="8" rx="1" fill="#e09a36" stroke="#3c2405"/><circle cx="1700" cy="109" r="2.8" fill="#e0a24a" stroke="#3c2405"/><circle cx="1705" cy="109" r="2.8" fill="#e0a24a" stroke="#3c2405"/><path d="M1708 114L1711 112V119L1708 117z" fill="#e09a36" stroke="#3c2405" stroke-width=".6"/>
<path d="M1765 109V121" stroke="#444" stroke-width="1.4"/>
<circle cx="1784" cy="115" r="9" fill="#8e8e8e"/><rect x="1779" y="112" width="10" height="7" rx="1" fill="#707070"/><circle cx="1781.5" cy="110" r="2.3" fill="#707070"/><circle cx="1786.5" cy="110" r="2.3" fill="#707070"/>
<use href="#bulb" x="1702.5" y="135"/><use href="#bulb" x="1702.5" y="155"/>
<path d="M1754 149V160" stroke="#444" stroke-width="1.4"/>
<g stroke="#66664a" fill="none"><path d="M1766 147H1769M1766 147V150M1780 147H1777M1780 147V150M1766 163H1769M1766 163V160M1780 163H1777M1780 163V160M1767 148L1770 151M1779 148L1776 151M1767 162L1770 159M1779 162L1776 159"/><circle cx="1773" cy="155" r="2.5" fill="#a0a070"/></g>
<circle cx="1703" cy="175" r="9" fill="#9d7a4a"/><use href="#tri" x="1703" y="175" stroke="#f59a1a"/><g fill="#fff"><circle cx="1697.5" cy="170.5" r="1"/><circle cx="1708.5" cy="170.5" r="1"/><circle cx="1703" cy="180" r="1"/></g>
<path d="M1766 169V181" stroke="#444" stroke-width="1.4"/>
<circle cx="1785" cy="175" r="9" fill="#8e8e8e"/><use href="#tri" x="1785" y="175" stroke="#555"/>
<use href="#eye" x="1838" y="114"/><use href="#eye" x="1838" y="134"/><use href="#eye" x="1838" y="154"/><use href="#eye" x="1838" y="174"/>
<use href="#arrow" x="1858" y="114"/><use href="#arrow" x="1858" y="134"/><use href="#arrow" x="1858" y="154"/><use href="#arrow" x="1858" y="174"/>
<use href="#cam" x="1878" y="114"/><use href="#cam" x="1878" y="134"/><use href="#cam" x="1878" y="154"/><use href="#cam" x="1878" y="174"/>
<!-- props header -->
<rect x="1666" y="211" width="14" height="5" rx="2" fill="#ddd"/><rect x="1666" y="218" width="14" height="5" rx="2" fill="#ddd"/><rect x="1670" y="212" width="5" height="3" fill="#333"/><rect x="1669" y="219" width="5" height="3" fill="#333"/>
<path d="M1721 207V227M1741 207V227M1761 207V227M1781 207V227M1801 207V227M1821 207V227M1841 207V227M1861 207V227M1881 207V227" fill="none" stroke="#1c1c1c"/>
<rect x="1704" y="213" width="14" height="10" rx="1" fill="#999" stroke="#111"/><circle cx="1711" cy="218" r="3" fill="#333"/><circle cx="1711" cy="218" r="1.4" fill="#b33"/>
<rect x="1729" y="215" width="11" height="9" fill="#c9c1a6" stroke="#222"/><rect x="1725" y="211" width="11" height="11" fill="#ddd" stroke="#222"/><rect x="1728" y="213" width="5" height="7" fill="#4570b0"/>
<circle cx="1747" cy="211" r="2" fill="#a8a64a"/><circle cx="1749" cy="222" r="3.6" fill="#bbb"/><rect x="1753" y="210" width="6" height="10" rx="2" fill="#4c6ea8"/>
<circle cx="1770" cy="217" r="6.3" fill="url(#earth)"/><path d="M1766 215Q1770 211 1773 215Q1771 220 1768 222z" fill="#7fa060"/>
<path d="M1784 212L1790 210L1796 212V222L1790 225L1784 222z" fill="#b98447" stroke="#222"/><path d="M1790 214V225L1796 222V212z" fill="#8e6232"/>
<g fill="none" stroke="#979797" stroke-width="1.8"><ellipse cx="1806" cy="219" rx="5" ry="3" transform="rotate(-40 1806 219)"/><ellipse cx="1815" cy="214" rx="5" ry="3" transform="rotate(-40 1815 214)"/></g>
<path d="M1825 224L1835 214" stroke="#6b92c4" stroke-width="3"/><path d="M1834 209L1838 209L1836 212L1838 213L1839 212L1838 216L1833 215Z" fill="#6b92c4"/>
<use href="#tri" x="1850" y="217" stroke="#bbb"/><g fill="#eee"><circle cx="1844.5" cy="212.5" r="1"/><circle cx="1855.5" cy="212.5" r="1"/><circle cx="1850" cy="222" r="1"/></g>
<circle cx="1870" cy="217" r="7" fill="url(#mat)" stroke="#111" stroke-width=".6"/>
<g><rect x="1884" y="210" width="14" height="14" fill="#c9c9c9"/><g fill="#a04040"><rect x="1884" y="210" width="4.7" height="4.7"/><rect x="1893.4" y="210" width="4.6" height="4.7"/><rect x="1888.7" y="214.7" width="4.7" height="4.7"/><rect x="1884" y="219.4" width="4.7" height="4.6"/><rect x="1893.4" y="219.4" width="4.6" height="4.6"/></g></g>
<!-- breadcrumb -->
<path d="M1664 257L1670 250M1668 245L1676 253L1678 249L1672 243z" stroke="#eee" stroke-width="1.4" fill="#ccc"/>
<circle cx="1686" cy="244" r="2" fill="#d0cf55"/><circle cx="1689" cy="254" r="3.6" fill="#ddd"/><rect x="1691" y="244" width="5" height="9" rx="2" fill="#4f7ec0"/>
<path d="M1705 246L1709 249L1705 252z" fill="#444"/><path d="M1794 246L1798 249L1794 252z" fill="#444"/>
<path d="M1725 244L1731 242L1737 244V254L1731 257L1725 254z" fill="#eda347" stroke="#222"/><path d="M1731 245V257L1737 254V244z" fill="#b26f22"/>
<circle cx="1819" cy="248" r="6.2" fill="url(#mat)" stroke="#222" stroke-width=".6"/>
<!-- list -->
<circle cx="1674" cy="289" r="7.5" fill="url(#sp)"/>
<circle cx="1674" cy="303" r="3.7" fill="#858585" stroke="#444"/><path d="M1672 303H1676M1674 301V305" stroke="#333"/>
<path d="M1758 302.5H1772M1758 305.5H1772" stroke="#111"/>
<use href="#plus" x="1869" y="284"/>
<rect x="1864" y="303" width="11" height="2.4" fill="#eee" stroke="#222" stroke-width=".7"/>
<path d="M1865 320H1873L1869 329z" fill="#111"/>
<circle cx="1672" cy="374" r="6" fill="url(#mat)" stroke="#111" stroke-width=".6"/>
<use href="#plus" x="1766" y="374"/><use href="#cross" x="1786" y="374"/>
<rect x="1809" y="367" width="9" height="6" fill="#eee" stroke="#111"/><rect x="1808" y="376" width="9" height="6" fill="#eee" stroke="#111"/><path d="M1818 371H1822V378H1817" stroke="#3f6fc0" fill="none"/>

<!-- preview -->
<svg x="1660" y="449" width="181" height="112" viewBox="30 12 543 336">
<rect x="30" y="12" width="543" height="336" fill="#949494" stroke="none"/>
<g fill="#393939">
<path d="M30 30L58 38V105L30 100z"/>
<path d="M58 12H133V55L58 38z"/>
<path d="M133 58L190 85V125L133 115z"/>
<path d="M58 105L133 115V178H58z"/>
<path d="M30 175H58V245L30 250z"/>
<path d="M133 178H165V235H133z"/>
<path d="M58 245L133 235V310L58 322z"/>
<path d="M190 12H262L232 45L190 62z"/>
<path d="M30 320L58 322L133 310L152 318L60 348H30z" fill="#4a4a4a"/>
<path d="M160 318L215 300L250 325L190 342z"/>
<path d="M415 15H470V58L415 70z"/>
<path d="M470 60L545 40V105L470 115z"/>
<path d="M545 100H573V175H545z"/>
<path d="M415 120L470 115V178H415z"/>
<path d="M470 178H545V245L470 235z"/>
<path d="M440 235H470V310L440 290z"/>
<path d="M545 250L573 245V320H545z"/>
<path d="M395 305L445 325L420 338L370 318z"/>
<path d="M470 300L573 330V348H530L440 310z" fill="#4a4a4a"/>
<path d="M340 12H415V20L365 40z"/>
</g>
<path d="M30 12H573V348H30z" fill="none" stroke="#2a2a2a" stroke-width="4"/>
<circle cx="300" cy="177" r="151" fill="url(#big)"/>
<ellipse cx="300" cy="334" rx="20" ry="6" fill="#2a2a2a"/>
</svg>
<path d="M1743 565H1757M1743 568H1757" stroke="#111"/>
<!-- preview side icons -->
<rect x="1858" y="453" width="12" height="12" fill="#9a9a9a" stroke="#222"/>
<circle cx="1864" cy="479" r="6.4" fill="url(#sp)" stroke="#111" stroke-width=".6"/>
<path d="M1858 497L1864 494L1870 497V505L1864 508L1858 505z" fill="#b6b6b6" stroke="#222" stroke-width=".7"/><path d="M1864 498V508L1870 505V497z" fill="#808080"/>
<path d="M1857 516Q1864 512 1871 516Q1869 521 1866 522V527H1862V522Q1859 521 1857 516z" fill="#c2c2c2"/>
<path d="M1858 547Q1858 540 1862 536M1862 547Q1862 542 1867 539M1867 546Q1868 544 1871 543" stroke="#ddd" stroke-width="1.3" fill="none"/>
<circle cx="1858" cy="553" r="2.2" fill="#ada94e"/><circle cx="1869" cy="556" r="3" fill="#597ca8"/><circle cx="1862" cy="562" r="4.6" fill="#d2d2d2"/>
<!-- number arrows -->
<g fill="#5a5a5a">
<path d="M1671 749L1667 753L1671 757zM1870 749L1874 753L1870 757zM1671 810L1667 814L1671 818zM1755 810L1759 814L1755 818zM1784 939L1780 943L1784 947zM1869 939L1873 943L1869 947z"/>
</g>
</svg>
</body></html>
